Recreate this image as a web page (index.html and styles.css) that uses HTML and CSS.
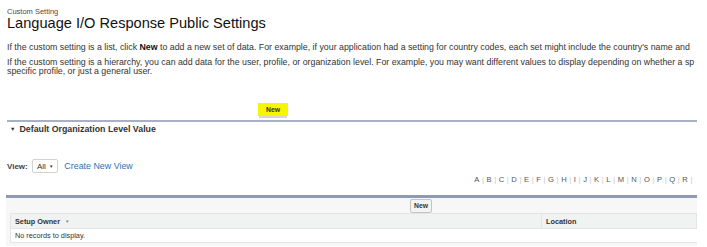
FILE: index.html
```html
<!DOCTYPE html>
<html>
<head>
<meta charset="utf-8">
<link rel="stylesheet" href="styles.css">
</head>
<body>
<div class="page">
  <div class="crumb">Custom Setting</div>
  <h1 class="title">Language I/O Response Public Settings</h1>
  <p class="para one">If the custom setting is a list, click <b>New</b> to add a new set of data. For example, if your application had a setting for country codes, each set might include the country's name and</p>
  <p class="para two">If the custom setting is a hierarchy, you can add data for the user, profile, or organization level. For example, you may want different values to display depending on whether a sp<br>specific profile, or just a general user.</p>
  <div class="btn-row"><span class="btn hl">New</span></div>
  <div class="section-head"><span class="tri">&#9660;</span>Default Organization Level Value</div>
  <div class="view-row">
    <span class="view-label">View:</span>
    <span class="select">All <span class="caret">&#9660;</span></span>
    <a class="link">Create New View</a>
  </div>
  <div class="letters">
    <span>A</span><i>|</i><span>B</span><i>|</i><span>C</span><i>|</i><span>D</span><i>|</i><span>E</span><i>|</i><span>F</span><i>|</i><span>G</span><i>|</i><span>H</span><i>|</i><span>I</span><i>|</i><span>J</span><i>|</i><span>K</span><i>|</i><span>L</span><i>|</i><span>M</span><i>|</i><span>N</span><i>|</i><span>O</span><i>|</i><span>P</span><i>|</i><span>Q</span><i>|</i><span>R</span><i>|</i>
  </div>
  <div class="block">
    <div class="toolbar"><span class="btn">New</span></div>
    <div class="grid">
      <div class="hrow">
        <div class="col c1">Setup Owner <span class="sort">&#9660;</span></div>
        <div class="col c2">Location</div>
      </div>
      <div class="drow">No records to display.</div>
    </div>
  </div>
</div>
</body>
</html>
```

FILE: styles.css
```css
html, body {
  margin: 0;
  padding: 0;
  background: #fff;
}
.page {
  width: 690px;
  padding-left: 7px;
  overflow: hidden;
  font-family: "Liberation Sans", Arial, sans-serif;
  color: #333;
}
.crumb {
  margin-top: 8px;
  height: 7px;
  line-height: 7px;
  font-size: 7.5px;
  color: #4a4a4a;
}
.title {
  margin: 0;
  height: 17px;
  line-height: 17px;
  font-size: 14.6px;
  font-weight: normal;
  color: #111;
}
.para {
  margin: 0;
  font-size: 8.8px;
  line-height: 9px;
  white-space: nowrap;
  color: #333;
}
.para b { color: #111; }
.one { margin-top: 11px; }
.two { margin-top: 6px; }
.btn-row {
  margin-top: 22px;
  height: 17px;
  padding-left: 251px;
}
.btn {
  display: inline-block;
  font-size: 6.8px;
  font-weight: bold;
  color: #333;
  border: 1px solid #c4c4c4;
  border-radius: 2px;
  background: #f4f4f4;
  padding: 0 3px;
  height: 12px;
  line-height: 12px;
}
.btn.hl {
  background: #f6f600;
  border-color: #f6f600;
  box-shadow: 0 3px 0 -1px #d6d6d6;
  padding: 0 7px;
  height: 11px;
  line-height: 12px;
  border-radius: 0;
}
.section-head {
  margin-top: 5px;
  border-top: 2px solid #a8b0c6;
  padding-top: 3px;
  height: 9px;
  line-height: 9px;
  font-size: 8.8px;
  font-weight: bold;
  color: #333;
}
.tri {
  font-size: 5.5px;
  margin: 0 4px 0 3px;
  position: relative;
  top: -1px;
}
.view-row {
  margin-top: 25px;
  height: 14px;
  display: flex;
  align-items: center;
  font-size: 8px;
}
.view-label {
  font-weight: bold;
  color: #444;
  width: 25px;
}
.select {
  display: inline-flex;
  align-items: center;
  height: 12px;
  padding: 0 4px;
  border: 1px solid #d2d2d2;
  border-radius: 2px;
  color: #333;
  font-size: 8px;
}
.caret {
  font-size: 4.5px;
  margin-left: 3px;
}
.link {
  margin-left: 6px;
  color: #2a74b8;
  font-size: 8.9px;
}
.letters {
  margin-top: 3px;
  height: 8px;
  line-height: 8px;
  display: flex;
  justify-content: flex-end;
  padding-right: 2px;
  font-size: 7.6px;
  color: #555;
}
.letters i {
  font-style: normal;
  color: #c8c8c8;
  margin: 0 2.6px;
}
.block {
  margin-top: 11px;
  margin-left: -1px;
  border-top: 3px solid #8f99b3;
  background: #f7f7f7;
  padding: 0 0 3px 4px;
}
.toolbar {
  height: 15px;
  padding-left: 400px;
  display: flex;
  align-items: center;
}
.grid {
  background: #fff;
}
.hrow {
  display: flex;
  height: 14px;
  background: #f1f2f2;
  border: 1px solid #e2e4e6;
  font-size: 7.3px;
  font-weight: bold;
  color: #333;
}
.col {
  display: flex;
  align-items: center;
}
.c1 {
  width: 531px;
  padding-left: 4px;
  box-sizing: border-box;
  border-right: 1px solid #e2e4e6;
}
.c2 {
  padding-left: 4px;
}
.sort {
  font-size: 4.5px;
  color: #888;
  margin-left: 5px;
}
.drow {
  height: 13px;
  line-height: 13px;
  padding-left: 4px;
  font-size: 7.3px;
  color: #333;
  border-left: 1px solid #e2e4e6;
  border-bottom: 1px solid #e2e4e6;
}
```
